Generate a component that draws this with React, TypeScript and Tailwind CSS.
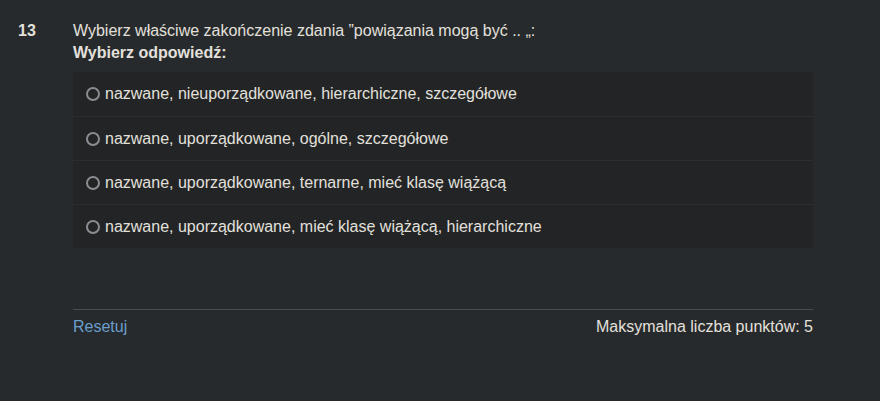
import React from "react";

const options = [
  "nazwane, nieuporządkowane, hierarchiczne, szczegółowe",
  "nazwane, uporządkowane, ogólne, szczegółowe",
  "nazwane, uporządkowane, ternarne, mieć klasę wiążącą",
  "nazwane, uporządkowane, mieć klasę wiążącą, hierarchiczne",
];

export default function App() {
  return (
    <div
      className="w-[880px] h-[401px] bg-[#272a2c] text-[#e3e0dc] flex text-[16px] leading-[22px]"
      style={{ fontFamily: '"Liberation Sans", Arial, sans-serif' }}
    >
      <div className="w-[73px] shrink-0 pl-[18px] pt-[20px] font-bold">13</div>
      <div className="w-[740px] pt-[20px] flex flex-col">
        <div>Wybierz właściwe zakończenie zdania ”powiązania mogą być .. „:</div>
        <div className="font-bold">Wybierz odpowiedź:</div>
        <div className="mt-[8px] bg-[#222426] rounded-[3px] flex flex-col">
          {options.map((o, i) => (
            <div
              key={i}
              className={
                "h-[44px] flex items-center pl-[13px] " +
                (i > 0 ? "border-t border-[#2b2d2f]" : "")
              }
            >
              <span className="w-[14px] h-[14px] rounded-full border-2 border-[#8b8b92] mr-[5px] shrink-0" />
              <span>{o}</span>
            </div>
          ))}
        </div>
        <div className="mt-[61px] border-t border-[#484b4e] pt-[6px] flex justify-between">
          <span className="text-[#6a9ecb]">Resetuj</span>
          <span>Maksymalna liczba punktów: 5</span>
        </div>
      </div>
    </div>
  );
}
